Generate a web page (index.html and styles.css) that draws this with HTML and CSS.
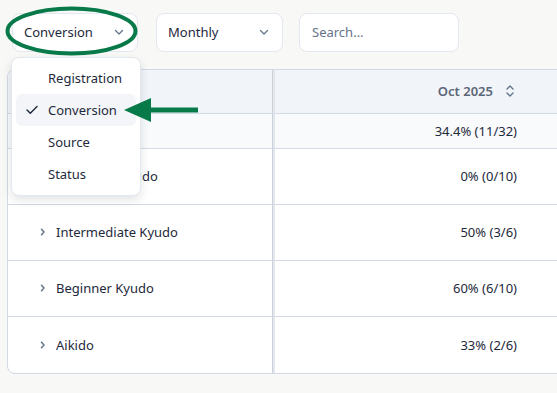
FILE: index.html
```html
<!DOCTYPE html>
<html>
<head>
<meta charset="utf-8">
<link rel="stylesheet" href="styles.css">
</head>
<body>
<div class="page">
  <div class="toolbar">
    <div class="select select-metric">
      <span>Conversion</span>
      <svg class="chev" width="12" height="12" viewBox="0 0 12 12"><path d="M2.5 4.5 L6 8 L9.5 4.5" fill="none" stroke="#64748b" stroke-width="1.3" stroke-linecap="round" stroke-linejoin="round"/></svg>
    </div>
    <div class="select select-period">
      <span>Monthly</span>
      <svg class="chev" width="12" height="12" viewBox="0 0 12 12"><path d="M2.5 4.5 L6 8 L9.5 4.5" fill="none" stroke="#64748b" stroke-width="1.3" stroke-linecap="round" stroke-linejoin="round"/></svg>
    </div>
    <div class="search">Search...</div>
  </div>

  <div class="card">
    <div class="row head">
      <div class="cell name"></div>
      <div class="cell val">
        <span>Oct 2025</span>
        <svg class="sort" width="10" height="14" viewBox="0 0 10 14"><path d="M2 5 L5 2 L8 5 M2 9 L5 12 L8 9" fill="none" stroke="#64748b" stroke-width="1.4" stroke-linecap="round" stroke-linejoin="round"/></svg>
      </div>
    </div>
    <div class="row total">
      <div class="cell name"></div>
      <div class="cell val">34.4% (11/32)</div>
    </div>
    <div class="row">
      <div class="cell name"><svg class="exp" width="16" height="8" viewBox="0 0 16 8"><path d="M1.5 1.2 L4 4 L1.5 6.8" fill="none" stroke="#64748b" stroke-width="1.5" stroke-linecap="round" stroke-linejoin="round"/></svg>Advanced Kyudo</div>
      <div class="cell val">0% (0/10)</div>
    </div>
    <div class="row">
      <div class="cell name"><svg class="exp" width="16" height="8" viewBox="0 0 16 8"><path d="M1.5 1.2 L4 4 L1.5 6.8" fill="none" stroke="#64748b" stroke-width="1.5" stroke-linecap="round" stroke-linejoin="round"/></svg>Intermediate Kyudo</div>
      <div class="cell val">50% (3/6)</div>
    </div>
    <div class="row">
      <div class="cell name"><svg class="exp" width="16" height="8" viewBox="0 0 16 8"><path d="M1.5 1.2 L4 4 L1.5 6.8" fill="none" stroke="#64748b" stroke-width="1.5" stroke-linecap="round" stroke-linejoin="round"/></svg>Beginner Kyudo</div>
      <div class="cell val">60% (6/10)</div>
    </div>
    <div class="row last">
      <div class="cell name"><svg class="exp" width="16" height="8" viewBox="0 0 16 8"><path d="M1.5 1.2 L4 4 L1.5 6.8" fill="none" stroke="#64748b" stroke-width="1.5" stroke-linecap="round" stroke-linejoin="round"/></svg>Aikido</div>
      <div class="cell val">33% (2/6)</div>
    </div>
  </div>

  <div class="menu">
    <div class="item">Registration</div>
    <div class="item selected">
      <svg class="check" width="12" height="10" viewBox="0 0 12 10"><path d="M1 5 L4.3 8.3 L11 1.5" fill="none" stroke="#1e293b" stroke-width="1.4" stroke-linecap="round" stroke-linejoin="round"/></svg>
      Conversion
    </div>
    <div class="item">Source</div>
    <div class="item">Status</div>
  </div>

  <svg class="annot" width="557" height="393" viewBox="0 0 557 393">
    <ellipse cx="71.5" cy="31" rx="64" ry="22.5" fill="none" stroke="#087a4a" stroke-width="4"/>
    <rect x="146" y="107.5" width="52" height="5" fill="#087a4a"/>
    <polygon points="124,110 151,98 151,122" fill="#087a4a"/>
  </svg>
</div>
</body>
</html>
```

FILE: styles.css
```css
* { box-sizing: border-box; }
html, body {
  margin: 0;
  padding: 0;
  width: 557px;
  height: 393px;
  overflow: hidden;
  background: #f8f8f6;
  font-family: "Noto Sans", "Open Sans", sans-serif;
  font-size: 13px;
  color: #1e293b;
}
.page {
  position: relative;
  width: 557px;
  height: 393px;
}
.toolbar {
  display: flex;
  align-items: center;
  padding: 13px 0 0 12px;
}
.select, .search {
  height: 39px;
  background: #fff;
  border: 1px solid #e2e8f0;
  border-radius: 8px;
  display: flex;
  align-items: center;
}
.select {
  justify-content: space-between;
  padding: 0 12px 1px 11px;
}
.select-metric { width: 126px; }
.select-period { width: 127px; margin-left: 18px; }
.search {
  width: 160px;
  margin-left: 16px;
  padding: 0 0 1px 12px;
  color: #64748b;
}
.chev { display: block; }

.card {
  margin: 17px 0 0 7px;
  width: 640px;
  background: #fff;
  border: 1px solid #d3dae5;
  border-radius: 8px;
  overflow: hidden;
}
.row {
  display: flex;
  height: 56px;
  border-bottom: 1px solid #d3dae5;
}
.row.last { border-bottom: none; height: 56px; }
.row.head { height: 44px; background: #f1f4f8; }
.row.total { height: 35px; background: #f8fafc; }
.cell {
  display: flex;
  align-items: center;
  padding-bottom: 1px;
}
.cell.name {
  width: 265px;
  padding-left: 32px;
  border-right: 1px solid #cbd2dc;
  box-shadow: 2px 0 0 #e4e7ec;
}
.cell.val {
  width: 282px;
  margin-left: 2px;
  justify-content: flex-end;
  padding-right: 40px;
}
.head .cell.val {
  color: #5b6678;
  font-weight: 600;
  padding-right: 42px;
}
.sort { margin-left: 12px; display: block; }
.exp {
  display: block;
  flex: none;
}

.menu {
  position: absolute;
  left: 11px;
  top: 57px;
  width: 130px;
  padding: 4px 4px 5px;
  background: #fff;
  border: 1px solid #e2e8f0;
  border-radius: 8px;
  box-shadow: 0 4px 10px rgba(15, 23, 42, 0.12);
}
.item {
  height: 32px;
  display: flex;
  align-items: center;
  padding: 0 0 1px 32px;
  position: relative;
  border-radius: 6px;
}
.item.selected { background: #f3f5f8; }
.check {
  position: absolute;
  left: 10px;
  top: 11px;
}
.annot {
  position: absolute;
  left: 0;
  top: 0;
  pointer-events: none;
}
```
